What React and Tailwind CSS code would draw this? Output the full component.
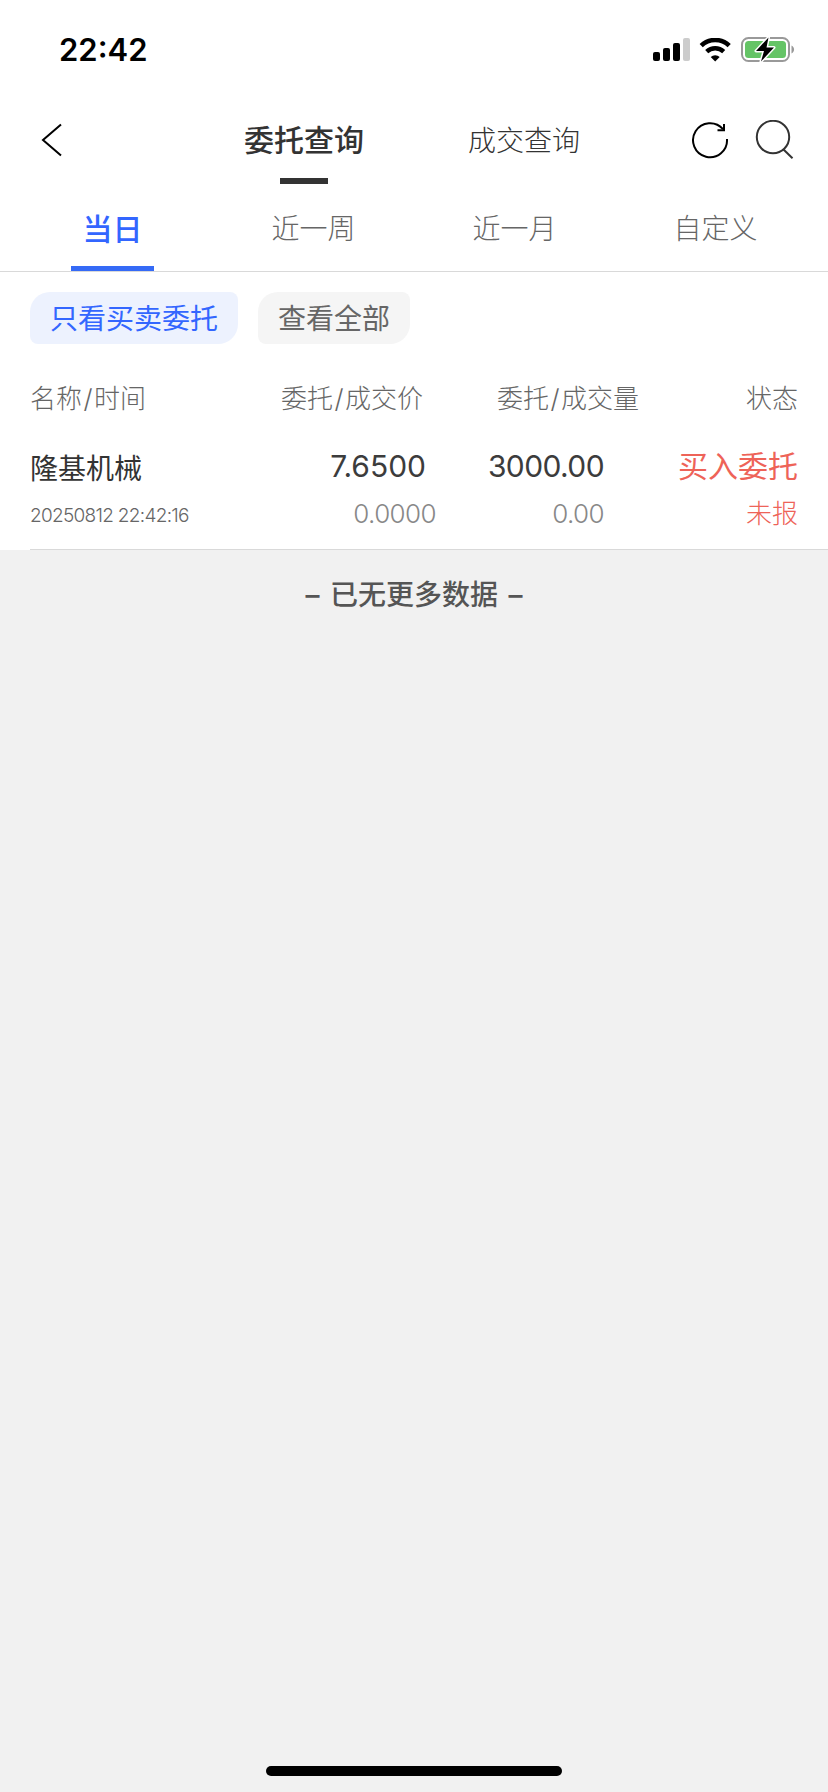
import React from 'react';

const tabs = ['当日', '近一周', '近一月', '自定义'];

const orders = [
  {
    name: '隆基机械',
    time: '20250812 22:42:16',
    price: '7.6500',
    dealPrice: '0.0000',
    amount: '3000.00',
    dealAmount: '0.00',
    type: '买入委托',
    status: '未报',
  },
];

function StatusBar() {
  return (
    <div className="flex h-[88px] items-center justify-between pt-3 pr-[33px] pl-[59px]">
      <span className="-mt-0.5 text-[31px] leading-none font-semibold text-black">22:42</span>
      <div className="flex items-center">
        <svg width="38" height="24" viewBox="0 0 38 24">
          <rect x="0" y="14" width="7" height="9" rx="2" fill="#000" />
          <rect x="10" y="10" width="7" height="13" rx="2" fill="#000" />
          <rect x="20" y="5" width="7" height="18" rx="2" fill="#000" />
          <rect x="30" y="0" width="7" height="23" rx="2" fill="#ccc" />
        </svg>
        <svg className="ml-2" width="34" height="24" viewBox="0 0 34 24" fill="none" stroke="#000">
          <path d="M2.2 7.6a20.3 20.3 0 0 1 28 0" strokeWidth="4.6" />
          <path d="M7.7 13.7a12.3 12.3 0 0 1 17 0" strokeWidth="4.4" />
          <path d="M16.2 23.4l-4.5-4.4a6.4 6.4 0 0 1 9 0z" fill="#000" stroke="none" />
        </svg>
        <svg className="mb-0.5 ml-2" width="54" height="28" viewBox="0 0 54 28">
          <rect x="1" y="3" width="47" height="23" rx="6.5" fill="none" stroke="#999" strokeWidth="2" />
          <path d="M50.5 10.5c3.4 1.4 3.4 6.6 0 8z" fill="#999" />
          <rect x="4" y="6" width="41" height="17" rx="3.5" fill="#65c466" />
          <path
            d="M27.5 2.5L15 16h8l-3 10.5L33 12.5h-7.5z"
            fill="#000"
            stroke="#fff"
            strokeWidth="3"
            strokeLinejoin="round"
            paintOrder="stroke"
          />
        </svg>
      </div>
    </div>
  );
}

function NavBar() {
  return (
    <div className="flex h-24 items-start pl-[41px]">
      <svg className="mt-[35px]" width="22" height="34" viewBox="0 0 22 34" fill="none" stroke="#000" strokeWidth="2">
        <path d="M20 1.5L2 17l18 15.5" />
      </svg>
      <div className="ml-[181px] flex h-24 w-[120px] flex-col items-center justify-between pt-[37px]">
        <span className="text-[30px] leading-[30px] font-medium whitespace-nowrap text-[#333]">委托查询</span>
        <span className="h-1.5 w-12 bg-[#333]" />
      </div>
      <span className="mt-[39px] ml-[104px] text-[28px] leading-7 font-light whitespace-nowrap text-[#333]">成交查询</span>
      <svg className="mt-8 ml-[111px]" width="40" height="40" viewBox="0 0 40 40" fill="none" stroke="#000" strokeWidth="2">
        <path d="M36 19A17 17 0 1 1 32 9.2" />
        <path d="M33 4v6.2h-6.5" />
      </svg>
      <svg className="mt-8 ml-6" width="40" height="40" viewBox="0 0 40 40" fill="none" stroke="#333" strokeWidth="2">
        <circle cx="18" cy="17" r="16.2" />
        <path d="M28.5 29.5l9 8.7" />
      </svg>
    </div>
  );
}

function PeriodTabs() {
  return (
    <div className="flex h-[88px] border-b border-[#d9d9d9] px-3">
      {tabs.map((tab, i) => (
        <div key={tab} className="flex flex-1 flex-col items-center justify-between pt-[30px]">
          <span
            className={
              i === 0
                ? 'text-[30px] leading-[30px] font-medium text-[#3366ff]'
                : 'text-[28px] leading-[30px] font-light text-[#666]'
            }
          >
            {tab}
          </span>
          {i === 0 && <span className="h-[5px] w-[83px] bg-[#356af6]" />}
        </div>
      ))}
    </div>
  );
}

function Filters() {
  return (
    <div className="flex gap-5 px-[30px] pt-5 text-[28px] leading-[54px]">
      <span className="h-[52px] rounded-tl-[20px] rounded-tr-lg rounded-br-[20px] rounded-bl-lg bg-[#edf2fe] px-5 text-[#3366ff]">
        只看买卖委托
      </span>
      <span className="h-[52px] rounded-tl-[20px] rounded-tr-lg rounded-br-[20px] rounded-bl-lg bg-[#f5f5f5] px-5 text-[#666]">
        查看全部
      </span>
    </div>
  );
}

function OrderRow({ order }) {
  return (
    <div className="ml-[30px] flex h-[116px] justify-between border-b border-[#d9d9d9] pr-[30px] whitespace-nowrap">
      <div className="w-[220px] pt-5">
        <p className="text-[28px] leading-[30px] text-[#333]">{order.name}</p>
        <p className="mt-[17px] text-[19px] leading-[30px] font-light tracking-[-0.7px] text-[#666]">{order.time}</p>
      </div>
      <div className="flex w-[186px] flex-col items-end pt-[17px]">
        <p className="mr-[10px] text-[30px] leading-[30px] text-[#3c3c3c]">{order.price}</p>
        <p className="mt-[18px] text-[26px] leading-[30px] font-light tracking-[-0.6px] text-[#888]">{order.dealPrice}</p>
      </div>
      <div className="w-[168px] pt-[17px] text-right">
        <p className="text-[30px] leading-[30px] tracking-[-0.6px] text-[#3c3c3c]">{order.amount}</p>
        <p className="mt-[18px] text-[26px] leading-[30px] font-light tracking-[-0.6px] text-[#888]">{order.dealAmount}</p>
      </div>
      <div className="w-[194px] pt-[17px] text-right text-[#ee6358]">
        <p className="text-[30px] leading-[30px]">{order.type}</p>
        <p className="mt-[18px] text-[26px] leading-[30px] font-light">{order.status}</p>
      </div>
    </div>
  );
}

function HeadPair({ left, right }) {
  return (
    <>
      {left}
      <span className="mx-[1.5px]">/</span>
      {right}
    </>
  );
}

export default function App() {
  return (
    <div className="flex h-[1792px] w-[828px] flex-col bg-[#f1f1f1] font-['Inter','Noto_Sans_CJK_SC',sans-serif]">
      <div className="bg-white">
        <StatusBar />
        <NavBar />
        <PeriodTabs />
        <Filters />

        <div className="flex h-[90px] px-[30px] pt-10 text-[26px] leading-[30px] font-light whitespace-nowrap text-[#666]">
          <span className="w-[251px]"><HeadPair left="名称" right="时间" /></span>
          <span className="w-[216px]"><HeadPair left="委托" right="成交价" /></span>
          <span><HeadPair left="委托" right="成交量" /></span>
          <span className="ml-auto">状态</span>
        </div>

        {orders.map((order) => (
          <OrderRow key={order.time} order={order} />
        ))}
      </div>

      <p className="mt-[30px] text-center text-[28px] leading-[30px] font-medium [word-spacing:3px] text-[#555]">– 已无更多数据 –</p>

      {/* home indicator */}
      <div className="mx-auto mt-auto mb-4 h-2.5 w-[296px] rounded-full bg-black" />
    </div>
  );
}
